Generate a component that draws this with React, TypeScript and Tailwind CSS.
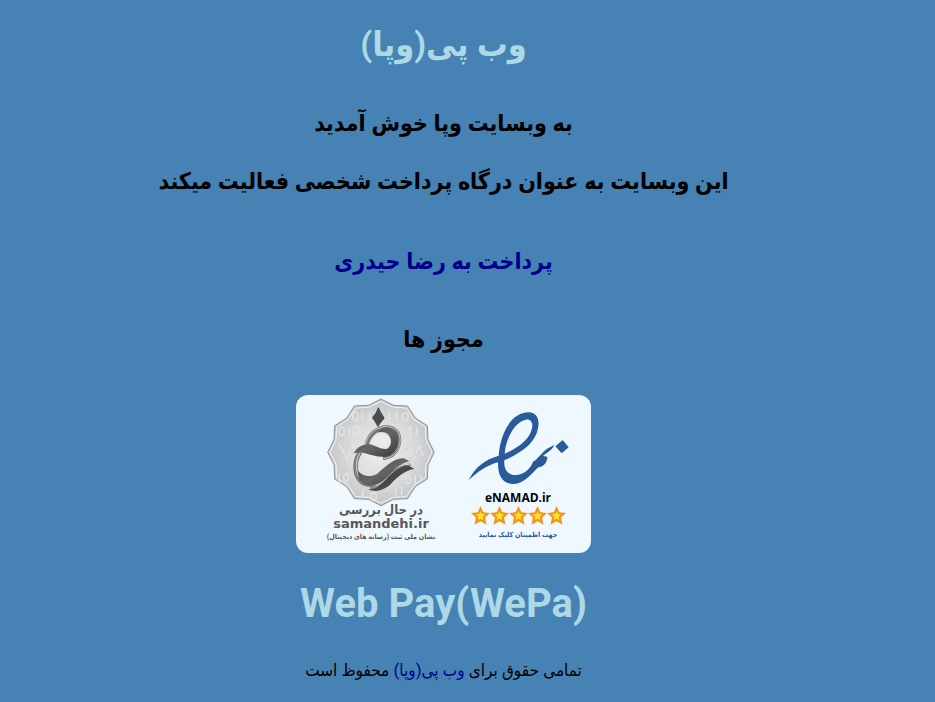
import React from 'react';

const STARS = [0, 1, 2, 3, 4];

/** 12-pointed seal with the calligraphic mark */
const SamandehiSeal: React.FC = () => (
  <svg viewBox="108 21 330 330" className="w-[110px] h-[110px]" aria-hidden="true">
    <defs>
      <radialGradient id="seal">
        <stop offset="0" stopColor="#ededee" />
        <stop offset="0.6" stopColor="#dadbdc" />
        <stop offset="1" stopColor="#c4c5c7" />
      </radialGradient>
      <linearGradient id="ink" x1="0" y1="0" x2="1" y2="1">
        <stop offset="0" stopColor="#3c3c3e" />
        <stop offset="0.5" stopColor="#666668" />
        <stop offset="1" stopColor="#39393b" />
      </linearGradient>
    </defs>
    <path
      d="M433 187L414 225 412 267 376 290 353 326 311 328 273 347 235 328 193 326 170 290 134 267 132 225 113 187 132 149 134 107 170 84 193 48 235 46 273 27 311 46 353 48 376 84 412 107 414 149Z"
      fill="url(#seal)"
      stroke="#8f959b"
      strokeWidth="3"
      strokeLinejoin="round"
    />
    <path
      d="M426 187L408 224 406 263 371 286 349 320 310 322 273 340 236 322 197 320 175 286 140 263 138 224 120 187 138 150 140 111 175 88 197 54 236 52 273 34 310 52 349 54 371 88 406 111 408 150Z"
      fill="none"
      stroke="#f2f3f4"
      strokeWidth="3"
    />
    {/* faint pattern of ones and zeroes */}
    <g fill="none" stroke="#e4e5e6" strokeWidth="4">
      <ellipse cx="196" cy="78" rx="8" ry="13" />
      <path d="M216 66v26M239 66v26M298 62v28M320 62v28" />
      <ellipse cx="346" cy="80" rx="8" ry="13" />
      <ellipse cx="155" cy="124" rx="8" ry="13" />
      <path d="M177 110v28M362 110v28M381 110v28M349 123l13-12" />
      <ellipse cx="197" cy="122" rx="8" ry="13" />
      <path d="M146 160l24 45 20-45M354 168l18 40 16-40 12 30M148 250v28" />
      <ellipse cx="168" cy="262" rx="7" ry="12" />
      <ellipse cx="354" cy="268" rx="7" ry="12" />
      <path d="M376 254v26M394 254v20M335 290v26M318 292v26M218 300v22" />
      <ellipse cx="251" cy="320" rx="8" ry="11" />
    </g>
    <path d="M143 208l42-28M340 222l62-45M170 165l34 25M330 190l28-18" fill="none" stroke="#cbccce" strokeWidth="2" />
    {/* dot */}
    <path
      d="M265 55C269 68 275 76 281 84C274 93 268 99 264 108C260 99 256 92 249 83C257 75 262 67 265 55Z"
      fill="#4c4c4e"
      stroke="#4c4c4e"
      strokeWidth="5"
      strokeLinejoin="round"
    />
    {/* grey contours behind the strokes */}
    <g fill="none">
      <path d="M230 164C237 132 264 112 290 112C320 114 332 136 326 162C320 186 303 201 279 204" stroke="#77777a" strokeWidth="13" />
      <path d="M227 162C235 129 262 109 291 110C323 112 335 136 329 163C323 188 305 204 281 206" stroke="#c4c4c6" strokeWidth="3" />
      <path d="M211 187C197 202 192 234 202 258C212 281 237 290 262 281" stroke="#7b7b7e" strokeWidth="14" />
      <path d="M209 190C199 204 195 232 204 255C211 272 225 282 242 283" stroke="#c4c4c6" strokeWidth="4" />
      <path d="M240 296C267 291 281 261 303 245C320 233 340 223 362 225" stroke="#8b8b8d" strokeWidth="9" />
      <path d="M257 287C278 280 289 255 313 237C328 227 344 222 358 223" stroke="#dddddf" strokeWidth="3" />
    </g>
    {/* upper loop */}
    <path
      fillRule="evenodd"
      d="M190 190C203 171 218 160 241 163C259 168 274 179 290 177C303 170 306 154 299 140C292 127 278 124 260 128C277 108 306 107 319 126C331 149 323 180 301 196C279 206 248 197 226 190C212 186 201 187 190 190Z"
      fill="url(#ink)"
    />
    <path d="M243 156C252 138 268 131 285 134C300 139 303 156 295 168C279 174 263 157 243 156Z" fill="#ebebec" />
    {/* lower sweeps */}
    <path
      d="M203 242C218 259 240 263 262 251C286 231 312 203 342 205L358 214C328 220 308 244 289 263C268 286 225 298 207 267Z"
      fill="url(#ink)"
    />
    <path d="M235 298C262 299 276 279 294 261C313 242 340 224 356 227L373 236C342 244 325 258 307 277C288 300 258 309 235 298Z" fill="#49494b" />
  </svg>
);

const EnamadMark: React.FC = () => (
  <svg viewBox="50 65 309 225" className="w-[103px] h-[75px]" fill="#285a9c" aria-hidden="true">
    <path
      fillRule="evenodd"
      d="M55 272C75 232 104 211 145 199C150 130 184 69 235 69C261 70 268 91 263 117C256 160 215 190 162 213C160 240 172 257 196 257C219 256 235 242 244 226C247 218 250 214 256 212L264 204L271 196C282 183 295 174 312 167C308 178 298 186 286 193L278 200L291 202C291 220 280 232 264 234C248 248 224 284 189 284C157 284 142 260 143 219C108 228 83 248 55 272ZM163 193C207 174 242 148 246 111C247 95 237 88 226 91C194 98 167 145 163 193Z"
    />
    <path d="M337 152L355 174L334 192L315 171Z" />
  </svg>
);

const Star: React.FC = () => (
  <svg viewBox="0 0 54 54" className="w-[19px] h-[19px]" aria-hidden="true">
    <path d="M27 0L35 18 54 20 40 33 44 53 27 43 10 53 14 33 0 20 19 18Z" fill="#f6921e" />
    <path d="M27 15L31 23 40 24 33 31 35 40 27 36 19 40 21 31 14 24 23 23Z" fill="#fde526" />
  </svg>
);

const App: React.FC = () => {
  return (
    <main
      dir="rtl"
      lang="fa"
      className="min-h-screen bg-[#4682b4] pt-5 pr-12 pb-5 flex flex-col items-center text-center text-black font-['Roboto','DejaVu_Sans_Condensed','DejaVu_Sans',sans-serif]"
    >
      <h1 className="text-[34px] leading-[48px] font-bold text-[#add8e6]">وب پی(وپا)</h1>

      <h2 className="mt-9 text-[23px] leading-10 font-bold">به وبسایت وپا خوش آمدید</h2>
      <h2 className="mt-[18px] text-[23px] leading-10 font-bold">این وبسایت به عنوان درگاه پرداخت شخصی فعالیت میکند</h2>
      <h2 className="mt-10 text-[23px] leading-10 font-bold">
        <a href="#pay" className="text-[#00008b]">پرداخت به رضا حیدری</a>
      </h2>
      <h2 className="mt-[38px] text-[23px] leading-10 font-bold">مجوز ها</h2>

      {/* license badges */}
      <div className="mt-[35px] h-[158px] rounded-xl bg-[#f0f8ff] pl-6 pr-3 flex gap-[15px]">
        <a href="#enamad" className="w-[122px] pt-4 flex flex-col items-center">
          <EnamadMark />
          <span dir="ltr" className="mt-1 text-[12px] leading-4 font-bold font-['Open_Sans',sans-serif]">eNAMAD.ir</span>
          <span className="flex">
            {STARS.map((star) => (
              <Star key={star} />
            ))}
          </span>
          <span className="text-[7px] leading-5 font-bold whitespace-nowrap text-[#285a9c]">جهت اطمینان کلیک نمایید</span>
        </a>
        <a href="#samandehi" className="w-[122px] pt-[2px] flex flex-col items-center text-[#58585a]">
          <SamandehiSeal />
          <span className="-mt-1 text-[13px] leading-[14px] font-bold whitespace-nowrap">در حال بررسی</span>
          <span dir="ltr" className="text-[13px] leading-[14px] font-bold font-['DejaVu_Sans',sans-serif]">samandehi.ir</span>
          <span className="text-[7px] leading-3 font-bold whitespace-nowrap">نشان ملی ثبت (رسانه های دیجیتال)</span>
        </a>
      </div>

      <h1 dir="ltr" className="mt-[27px] text-[40px] leading-[48px] font-bold text-[#add8e6]">Web Pay(WePa)</h1>

      <footer className="mt-[30px] text-[17px] leading-6">
        تمامی حقوق برای <a href="#home" className="text-[#00008b]">وب پی(وپا)</a> محفوظ است
      </footer>
    </main>
  );
};

export default App;
